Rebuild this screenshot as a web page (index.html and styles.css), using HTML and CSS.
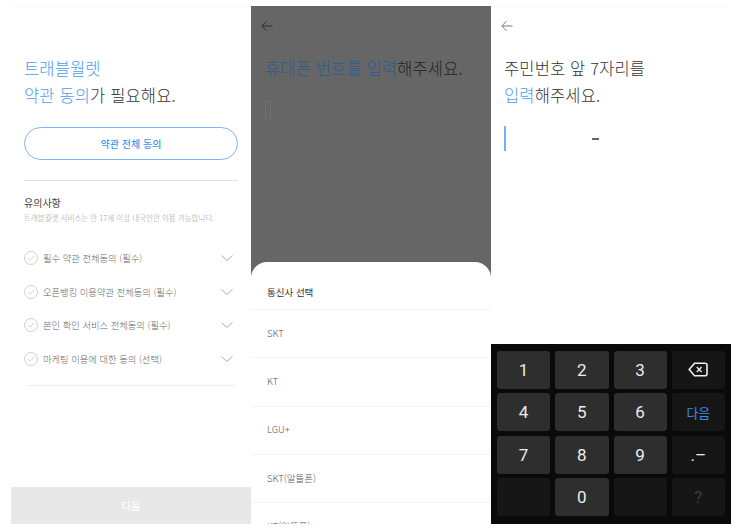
FILE: index.html
```html
<!DOCTYPE html>
<html lang="ko">
<head>
<meta charset="utf-8">
<title>트래블월렛</title>
<link rel="stylesheet" href="styles.css">
</head>
<body>
<main class="screens">
  <section class="panel terms">
    <h1 class="title"><span class="accent">트래블월렛</span><br><span class="accent">약관 동의</span>가 필요해요.</h1>
    <button class="all-btn">약관 전체 동의</button>
    <hr class="rule">
    <h2 class="notice-title">유의사항</h2>
    <p class="notice-sub">트래블월렛 서비스는 만 17세 이상 내국인만 이용 가능합니다.</p>
    <ul class="agree-list">
      <li class="agree"><svg class="check" viewBox="0 0 16 16"><circle cx="8" cy="8" r="7.4"/><path d="M4.6 8.2l2.4 2.4 4.6-4.8"/></svg><span class="agree-text">필수 약관 전체동의 (필수)</span><svg class="chev" viewBox="0 0 12 6"><path d="M.5.5L6 5.5 11.5.5"/></svg></li>
      <li class="agree"><svg class="check" viewBox="0 0 16 16"><circle cx="8" cy="8" r="7.4"/><path d="M4.6 8.2l2.4 2.4 4.6-4.8"/></svg><span class="agree-text">오픈뱅킹 이용약관 전체동의 (필수)</span><svg class="chev" viewBox="0 0 12 6"><path d="M.5.5L6 5.5 11.5.5"/></svg></li>
      <li class="agree"><svg class="check" viewBox="0 0 16 16"><circle cx="8" cy="8" r="7.4"/><path d="M4.6 8.2l2.4 2.4 4.6-4.8"/></svg><span class="agree-text">본인 확인 서비스 전체동의 (필수)</span><svg class="chev" viewBox="0 0 12 6"><path d="M.5.5L6 5.5 11.5.5"/></svg></li>
      <li class="agree"><svg class="check" viewBox="0 0 16 16"><circle cx="8" cy="8" r="7.4"/><path d="M4.6 8.2l2.4 2.4 4.6-4.8"/></svg><span class="agree-text">마케팅 이용에 대한 동의 (선택)</span><svg class="chev" viewBox="0 0 12 6"><path d="M.5.5L6 5.5 11.5.5"/></svg></li>
    </ul>
    <hr class="rule rule-light">
    <button class="next-btn">다음</button>
  </section>

  <section class="panel phone">
    <div class="dim">
      <svg class="back back-dim" viewBox="0 0 12 12"><path d="M11.5 6H1M5.5 1.2L.8 6l4.7 4.8"/></svg>
      <h1 class="title title-dim"><span class="accent-dim">휴대폰 번호를 입력</span>해주세요.</h1>
      <div class="phone-input"></div>
    </div>
    <div class="sheet">
      <div class="sheet-title">통신사 선택</div>
      <div class="carrier">SKT</div>
      <div class="carrier">KT</div>
      <div class="carrier">LGU+</div>
      <div class="carrier">SKT(알뜰폰)</div>
      <div class="carrier">KT(알뜰폰)</div>
    </div>
  </section>

  <section class="panel rrn">
    <svg class="back" viewBox="0 0 12 12"><path d="M11.5 6H1M5.5 1.2L.8 6l4.7 4.8"/></svg>
    <h1 class="title">주민번호 앞 7자리를<br><span class="accent">입력</span>해주세요.</h1>
    <div class="rrn-field"><span class="caret"></span><span class="dash"></span></div>
    <div class="keypad">
      <div class="key">1</div><div class="key">2</div><div class="key">3</div>
      <div class="key key-fn"><svg class="del" viewBox="0 0 20 15"><path d="M6.5 1.2H17a2 2 0 0 1 2 2v8.6a2 2 0 0 1-2 2H6.5L1.2 7.5z"/><path class="del-x" d="M8.8 5l4.8 5M13.6 5l-4.8 5"/></svg></div>
      <div class="key">4</div><div class="key">5</div><div class="key">6</div>
      <div class="key key-fn key-next">다음</div>
      <div class="key">7</div><div class="key">8</div><div class="key">9</div>
      <div class="key key-fn key-punct">.–</div>
      <div class="key key-fn"></div><div class="key">0</div><div class="key key-fn"></div>
      <div class="key key-fn key-q">?</div>
    </div>
  </section>
</main>
</body>
</html>
```
FILE: styles.css
```css
* { box-sizing: border-box; }
html, body { margin: 0; padding: 0; background: #fff; }
body { font-family: "Noto Sans CJK KR", "Noto Sans", sans-serif; font-weight: 300; color: #333; }
.screens { display: flex; width: 744px; height: 531px; padding: 6px 13px 7px 11px; }
.panel { width: 240px; height: 518px; display: flex; flex-direction: column; position: relative; overflow: hidden; }

.title { margin: 0; font-size: 16.5px; line-height: 27px; font-weight: 300; letter-spacing: .15px; color: #333; white-space: nowrap; }
.accent { color: #4a9df0; }

.terms { padding-top: 48px; border-top: 1px solid #f8f8f8; }
.terms .title { margin-left: 13px; }
.all-btn { margin: 18px 13px 0; width: 214px; height: 33px; flex: none; border: 1px solid #7db6f2; border-radius: 17px; background: #fff; color: #3f96ee; font: 500 10px "Noto Sans CJK KR", sans-serif; }
.rule { flex: none; margin: 20px 13px 0; width: 214px; border: 0; border-top: 1px solid #e0e0e0; }
.notice-title { margin: 15px 13px 0; font-size: 10px; line-height: 14px; font-weight: 400; color: #444; }
.notice-sub { margin: 2px 13px 0; font-size: 7.5px; line-height: 12px; color: #999; white-space: nowrap; }
.agree-list { list-style: none; margin: 17px 0 0 13px; padding: 0; width: 214px; }
.agree { display: flex; align-items: center; height: 33.8px; }
.check { width: 14px; height: 14px; flex: none; fill: none; stroke: #bdbdbd; stroke-width: .8; }
.agree-text { margin-left: 5px; flex: 1; font-size: 9.3px; color: #666; white-space: nowrap; }
.chev { width: 12px; height: 6px; flex: none; margin-right: 5px; fill: none; stroke: #999; stroke-width: .8; }
.rule-light { margin: 9px 16px 0; width: 208px; border-top-color: #eee; }
.next-btn { margin-top: auto; flex: none; width: 240px; height: 37px; border: 0; background: #e8e8e8; color: #fff; font: 400 10px "Noto Sans CJK KR", sans-serif; }

.phone { background: #666; }
.dim { flex: 1; padding: 14px 13px 0; min-height: 0; }
.back { display: block; width: 12px; height: 12px; fill: none; stroke: #777; stroke-width: 1; flex: none; }
.back-dim { margin-left: -3px; stroke: #2d2d2d; }
.title-dim { margin-top: 23px; color: #222; letter-spacing: .15px; margin-left: 1px; }
.accent-dim { color: #2c5d90; }
.phone-input { margin: 19px 0 0 1px; width: 6px; height: 18px; border: 1px solid #707070; }
.sheet { flex: none; height: 262px; background: #fff; border-radius: 16px 16px 0 0; overflow: hidden; }
.sheet-title { height: 48px; padding: 22px 16px 0; font-size: 9.5px; line-height: 16px; font-weight: 400; color: #333; border-bottom: 1px solid #f1f1f1; }
.carrier { height: 48.3px; display: flex; align-items: center; padding: 0 0 2px 16px; font-size: 9.5px; color: #555; border-bottom: 1px solid #f3f3f3; }

.rrn { padding-top: 13px; border-top: 1px solid #f8f8f8; }
.rrn .back { margin-left: 10px; }
.rrn .title { margin: 23px 0 0 13px; }
.rrn-field { flex: none; height: 25px; margin: 17px 0 0 13px; display: flex; align-items: center; }
.caret { width: 1.5px; height: 25px; background: #6fb0f8; }
.dash { width: 7px; height: 2px; margin-left: 86.5px; background: #666; }
.keypad { margin-top: auto; flex: none; height: 180px; background: #0a0a0a; padding: 7px 6px 8px; display: grid; grid-template-columns: repeat(4, 1fr); grid-template-rows: repeat(4, 1fr); gap: 4.7px 5px; }
.key { background: #2e2e2e; border-radius: 3px; display: flex; align-items: center; justify-content: center; color: #ececec; font: 400 17px Roboto, sans-serif; }
.key-fn { background: #161616; }
.key-next { color: #3f8ae6; font: 400 13px "Noto Sans CJK KR", sans-serif; }
.key-punct { font-size: 17px; }
.key-q { color: #3d3d3d; }
.del { width: 20px; height: 15px; fill: none; stroke: #eee; stroke-width: 1.6; }
.del-x { stroke-width: 1.4; }
```
